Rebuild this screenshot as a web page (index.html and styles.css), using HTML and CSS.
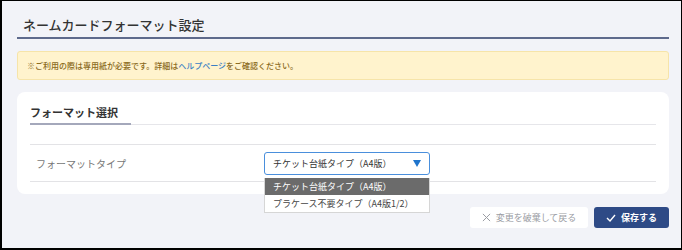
FILE: index.html
```html
<!DOCTYPE html>
<html>
<head>
  <meta charset="utf-8">
  <title>ネームカードフォーマット設定</title>
  <link rel="stylesheet" href="styles.css">
</head>
<body>
  <div class="frame">
    <h1 class="page-title">ネームカードフォーマット設定</h1>

    <div class="notice">
      ※ご利用の際は専用紙が必要です。詳細は<a href="#">ヘルプページ</a>をご確認ください。
    </div>

    <div class="card">
      <div class="card-head">
        <h2>フォーマット選択</h2>
      </div>
      <div class="form-row">
        <div class="form-label">フォーマットタイプ</div>
        <div class="select-wrap">
          <div class="select-box">
            <span>チケット台紙タイプ（A4版）</span>
            <span class="select-arrow"></span>
          </div>
          <ul class="select-menu">
            <li class="selected">チケット台紙タイプ（A4版）</li>
            <li>プラケース不要タイプ（A4版1/2）</li>
          </ul>
        </div>
      </div>
    </div>

    <div class="actions">
      <button class="btn btn-cancel">
        <svg width="9" height="9" viewBox="0 0 10 10"><path d="M1 1 L9 9 M9 1 L1 9" stroke="#9a9ca3" stroke-width="1.1" fill="none"/></svg>
        変更を破棄して戻る
      </button>
      <button class="btn btn-save">
        <svg width="10" height="8" viewBox="0 0 10 8"><path d="M1 4 L4 7 L9 1" stroke="#fff" stroke-width="1.4" fill="none"/></svg>
        保存する
      </button>
    </div>
  </div>
</body>
</html>
```

FILE: styles.css
```css
* {
  box-sizing: border-box;
}
body {
  margin: 0;
  font-family: "Noto Sans CJK JP", "Noto Sans", sans-serif;
  background-color: #000;
}
.frame {
  height: 250px;
  background-color: #f2f3f8;
  border: 1px solid #000;
  border-left-width: 2px;
  border-bottom-width: 2px;
  padding: 0 12px 0 15px;
}

.page-title {
  margin: 15px 0 0;
  padding: 0 0 3px 6px;
  font-size: 13px;
  line-height: 18px;
  font-weight: 500;
  color: #333;
  border-bottom: 2px solid #5e6a8c;
}

.notice {
  margin-top: 12px;
  height: 29px;
  display: flex;
  align-items: center;
  padding: 0 9px;
  background-color: #fff3cd;
  border: 1px solid #f6e4a9;
  border-radius: 3px;
  font-size: 8px;
  font-weight: 500;
  color: #8a6a1c;
}
.notice a {
  color: #3b7fc4;
  text-decoration: none;
}

.card {
  margin-top: 12px;
  height: 102px;
  background-color: white;
  border-radius: 8px;
  padding: 0 13px;
}
.card-head {
  display: flex;
  padding-top: 13px;
  border-bottom: 1px solid #e6e6ea;
}
.card-head h2 {
  margin: 0 0 -1px;
  padding-bottom: 4px;
  width: 101px;
  font-size: 11px;
  line-height: 14px;
  font-weight: bold;
  color: #333;
  border-bottom: 2px solid #a4a8bb;
}

.form-row {
  margin-top: 19px;
  height: 38px;
  display: grid;
  grid-template-columns: 234px 166px;
  align-items: center;
  border-top: 1px solid #e3e3e6;
  border-bottom: 1px solid #e3e3e6;
}
.form-label {
  padding-left: 6px;
  font-size: 10px;
  color: #777;
}

.select-wrap {
  position: relative;
}
.select-box {
  height: 23px;
  display: flex;
  align-items: center;
  justify-content: space-between;
  padding: 0 8px 0 8px;
  border: 1px solid #4a8fdc;
  border-radius: 3px;
  font-size: 9px;
  color: #333;
  background-color: white;
}
.select-arrow {
  width: 0;
  height: 0;
  border-left: 4px solid transparent;
  border-right: 4px solid transparent;
  border-top: 7px solid #1f74cc;
}
.select-menu {
  position: absolute;
  top: 26px;
  left: 0;
  width: 166px;
  margin: 0;
  padding: 0;
  list-style: none;
  background-color: white;
  border: 1px solid #d6d6d6;
  border-top: none;
  font-size: 9px;
  color: #444;
}
.select-menu li {
  height: 17px;
  line-height: 17px;
  padding-left: 8px;
}
.select-menu li.selected {
  background-color: #6b6b6b;
  color: white;
}

.actions {
  margin-top: 13px;
  display: flex;
  justify-content: flex-end;
  gap: 6px;
}
.btn {
  height: 21px;
  display: flex;
  align-items: center;
  justify-content: center;
  gap: 5px;
  border: none;
  border-radius: 3px;
  font-family: inherit;
  font-size: 9px;
  cursor: pointer;
}
.btn-cancel {
  width: 118px;
  background-color: white;
  color: #9a9ca3;
}
.btn-save {
  width: 75px;
  background-color: #2e4a86;
  color: white;
  font-weight: bold;
}
```
